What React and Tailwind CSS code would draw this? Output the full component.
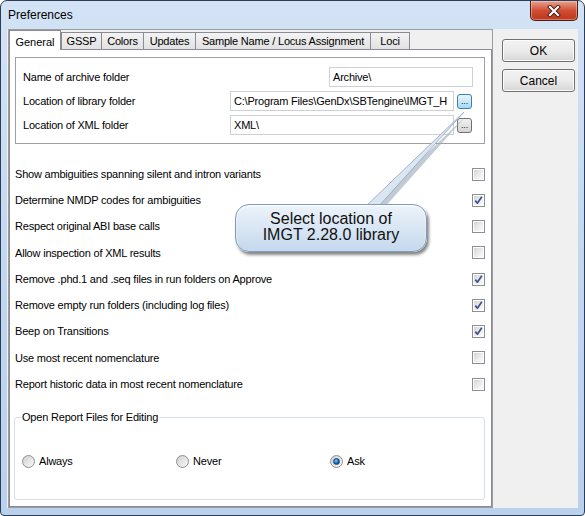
import React from "react";

const F = "font-['Liberation_Sans',Arial,sans-serif]";

function Check({ checked }) {
  return (
    <div className="w-[13px] h-[13px] border border-[#8e8f8f] bg-white p-[1px] shrink-0">
      <div className="w-full h-full bg-linear-to-br from-[#d4d4d4] via-[#ebebeb] to-[#fbfbfb] flex items-center justify-center">
        {checked && (
          <svg width="9" height="9" viewBox="0 0 9 9">
            <path d="M1.3 4.6 L3.4 7.2 L7.8 0.8" stroke="#3c5291" strokeWidth="1.7" fill="none" strokeLinejoin="round" />
          </svg>
        )}
      </div>
    </div>
  );
}

function Radio({ checked }) {
  return (
    <div className="w-[13px] h-[13px] rounded-full border border-[#8e8f8f] bg-linear-to-br from-[#cfcfcf] to-[#fafafa] flex items-center justify-center shrink-0">
      {checked && (
        <div className="w-[7px] h-[7px] rounded-full bg-[radial-gradient(circle_at_40%_35%,#7ad1ff,#0a61b8_60%,#0c3f7d)] border border-[#13457e]" />
      )}
    </div>
  );
}

function Browse({ hot }) {
  return (
    <div
      className={
        "w-[15px] h-[15px] rounded-[3px] border flex items-end justify-center text-[9px] leading-[9px] pb-[2px] text-[#222] " +
        (hot
          ? "border-[#3c7fb1] bg-linear-to-b from-[#eaf6fd] to-[#a7d9f5]"
          : "border-[#707070] bg-linear-to-b from-[#f2f2f2] to-[#d4d4d4]")
      }
    >
      ...
    </div>
  );
}

function Tab({ label, w, first }) {
  return (
    <div
      className={
        "h-[17px] border border-b-0 border-[#898c95] bg-linear-to-b from-[#f3f3f3] to-[#e2e2e2] flex items-center justify-center text-[11px] text-black tracking-[-0.2px] " +
        (first ? "" : "-ml-[1px]")
      }
      style={{ width: w }}
    >
      {label}
    </div>
  );
}

const options = [
  ["Show ambiguities spanning silent and intron variants", false],
  ["Determine NMDP codes for ambiguities", true],
  ["Respect original ABI base calls", false],
  ["Allow inspection of XML results", false],
  ["Remove .phd.1 and .seq files in run folders on Approve", true],
  ["Remove empty run folders (including log files)", true],
  ["Beep on Transitions", true],
  ["Use most recent nomenclature", false],
  ["Report historic data in most recent nomenclature", false],
];

export default function App() {
  return (
    <div className={"relative w-[585px] h-[516px] border border-[#2c3e57] rounded-t-[7px] rounded-b-[4px] bg-linear-to-b from-[#d3e3f5] via-[#c2d8f1] to-[#b9d1ec] overflow-hidden text-black " + F}>
      {/* title bar */}
      <div className="h-[28px] flex items-start">
        <div className="pl-[7px] pt-[6px] text-[12px] leading-[16px] text-black">Preferences</div>
        <div className="ml-auto mr-[6px] w-[48px] h-[20px] rounded-b-[5px] border border-[#4b1d14] border-t-0 bg-linear-to-b from-[#e8a090] via-[#cf4e33] to-[#c0351a] flex items-center justify-center shadow-[inset_0_0_0_1px_rgba(255,255,255,0.35)]">
          <svg width="14" height="12" viewBox="0 0 14 12">
            <path d="M3 2 L11 10 M11 2 L3 10" stroke="#3b1a12" strokeWidth="4" strokeLinecap="square" />
            <path d="M3 2 L11 10 M11 2 L3 10" stroke="#ffffff" strokeWidth="2.2" strokeLinecap="square" />
          </svg>
        </div>
      </div>

      {/* client */}
      <div className="mx-[6px] h-[479px] bg-[#f0f0f0] flex">
        {/* tab frame */}
        <div className="ml-[1px] w-[485px] h-full border border-[#9c9c9c] flex flex-col">
          <div className="h-[19px] flex items-end shrink-0">
            <div className="relative z-10 w-[52px] h-[20px] -mb-[1px] bg-white border border-b-0 border-[#898c95] flex items-start justify-center pt-[3px] text-[11px]">
              General
            </div>
            <Tab label="GSSP" w={41} first />
            <Tab label="Colors" w={43} />
            <Tab label="Updates" w={53} />
            <Tab label="Sample Name / Locus Assignment" w={176} />
            <Tab label="Loci" w={40} />
          </div>
          <div className="flex-1 bg-white border border-[#898c95] flex flex-col text-[11px] tracking-[-0.2px]">
            {/* folder box */}
            <div className="mt-[7px] ml-[5px] mr-[6px] h-[87px] border border-[#a0a0a0] pt-[7px] pl-[7px] pr-[11px] flex flex-col">
              <div className="h-[24px] flex items-center">
                <span>Name of archive folder</span>
                <div className="ml-auto w-[144px] h-[20px] border border-[#cdd0d5] flex items-center pl-[3px]">Archive\</div>
              </div>
              <div className="h-[24px] flex items-center">
                <span>Location of library folder</span>
                <div className="ml-auto w-[224px] h-[20px] border border-[#cdd0d5] flex items-center pl-[3px] overflow-hidden whitespace-nowrap">
                  <span className="block w-[218px] overflow-hidden">C:\Program Files\GenDx\SBTengine\IMGT_H</span>
                </div>
                <div className="ml-[3px] mr-[1px]"><Browse hot /></div>
              </div>
              <div className="h-[24px] flex items-center">
                <span>Location of XML folder</span>
                <div className="ml-auto w-[224px] h-[20px] border border-[#cdd0d5] flex items-center pl-[3px]">XML\</div>
                <div className="ml-[3px] mr-[1px]"><Browse /></div>
              </div>
            </div>

            {/* options */}
            <div className="mt-[17px] pl-[5px] pr-[6px] flex flex-col">
              {options.map(([t, c]) => (
                <div key={t} className="h-[26.25px] flex items-center justify-between">
                  <span>{t}</span>
                  <Check checked={c} />
                </div>
              ))}
            </div>

            {/* group box */}
            <div className="relative mt-[20px] ml-[4px] mr-[6px] h-[83px] border border-[#d5dfe5] rounded-[3px]">
              <div className="absolute -top-[8px] left-[6px] bg-white px-[1px] leading-[14px]">Open Report Files for Editing</div>
              <div className="mt-[35px] pl-[7px] flex items-center">
                <div className="w-[154px] flex items-center gap-[4px]"><Radio /><span>Always</span></div>
                <div className="w-[154px] flex items-center gap-[4px]"><Radio /><span>Never</span></div>
                <div className="w-[154px] flex items-center gap-[4px]"><Radio checked /><span>Ask</span></div>
              </div>
            </div>
          </div>
        </div>

        {/* buttons */}
        <div className="ml-[9px] mt-[10px] flex flex-col gap-[7px]">
          <div className="w-[73px] h-[23px] rounded-[3px] border border-[#707070] bg-linear-to-b from-[#f2f2f2] via-[#ebebeb] to-[#d6d6d6] flex items-center justify-center text-[12px] shadow-[inset_0_0_0_1px_#fcfcfc]">OK</div>
          <div className="w-[73px] h-[23px] rounded-[3px] border border-[#707070] bg-linear-to-b from-[#f2f2f2] via-[#ebebeb] to-[#d6d6d6] flex items-center justify-center text-[12px] shadow-[inset_0_0_0_1px_#fcfcfc]">Cancel</div>
        </div>
      </div>

      {/* callout pointer */}
      <svg className="absolute left-0 top-0 pointer-events-none" width="585" height="516">
        <polygon points="366,206 380,206 464,112" fill="#9aa8b8" opacity="0.6" transform="translate(2,2)" />
        <polygon points="364,206 377,206 463,111" fill="#dbe6f3" stroke="#8ea3bd" strokeWidth="0.8" />
      </svg>

      {/* callout bubble */}
      <div className="absolute left-[234px] top-[203px] w-[192px] h-[48px] rounded-[14px] border border-[#7f9bbd] bg-linear-to-b from-[#edf3fa] via-[#d9e6f4] to-[#c5d8ed] shadow-[2px_3px_3px_rgba(40,40,40,0.55),inset_0_1px_2px_rgba(255,255,255,0.9)] flex flex-col items-center pt-[6px] text-[16px] leading-[16px] text-[#111]">
        <span>Select location of</span>
        <span>IMGT 2.28.0 library</span>
      </div>
    </div>
  );
}
